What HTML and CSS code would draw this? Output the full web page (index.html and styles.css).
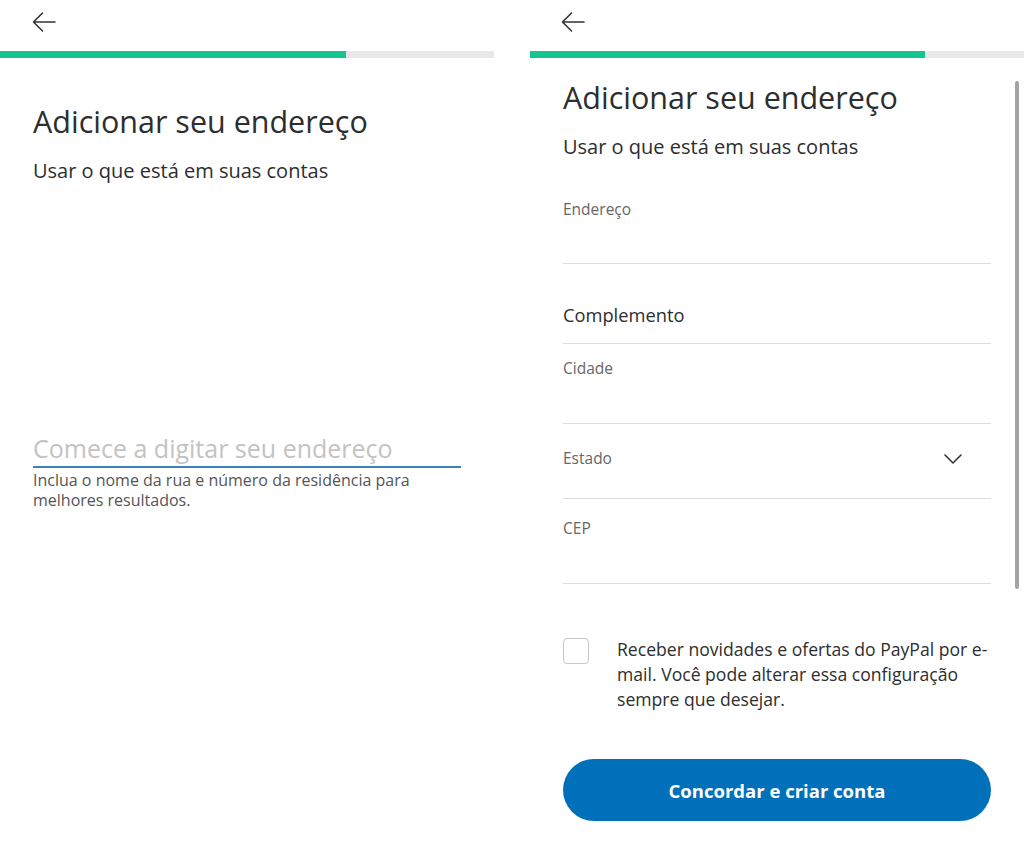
FILE: index.html
```html
<!DOCTYPE html>
<html lang="pt-BR">
<head>
<meta charset="utf-8">
<title>Adicionar seu endereço</title>
<link rel="stylesheet" href="styles.css">
</head>
<body>
<div class="page">
  <section class="screen">
    <header class="topbar">
      <svg class="back" width="24" height="20" viewBox="0 0 24 20" aria-hidden="true">
        <path d="M23 10H1.5M10.5 1L1.5 10l9 9" fill="none" stroke="#333" stroke-width="1.6" stroke-linecap="round" stroke-linejoin="round"/>
      </svg>
    </header>
    <div class="progress"><div class="progress-fill" style="width:70%"></div></div>
    <div class="content content-left">
      <h1 class="title">Adicionar seu endereço</h1>
      <p class="subtitle">Usar o que está em suas contas</p>
      <div class="search">
        <div class="search-input">Comece a digitar seu endereço</div>
        <p class="helper">Inclua o nome da rua e número da residência para melhores resultados.</p>
      </div>
    </div>
  </section>

  <section class="screen screen-right">
    <header class="topbar">
      <svg class="back" width="24" height="20" viewBox="0 0 24 20" aria-hidden="true">
        <path d="M23 10H1.5M10.5 1L1.5 10l9 9" fill="none" stroke="#333" stroke-width="1.6" stroke-linecap="round" stroke-linejoin="round"/>
      </svg>
    </header>
    <div class="progress"><div class="progress-fill" style="width:80%"></div></div>
    <div class="scrollbar"></div>
    <div class="content content-right">
      <h1 class="title">Adicionar seu endereço</h1>
      <p class="subtitle">Usar o que está em suas contas</p>
      <div class="field field-endereco"><span class="label">Endereço</span></div>
      <div class="field field-complemento"><span class="label label-big">Complemento</span></div>
      <div class="field field-cidade"><span class="label">Cidade</span></div>
      <div class="field field-estado">
        <span class="label">Estado</span>
        <svg class="chevron" width="18" height="10" viewBox="0 0 18 10" aria-hidden="true">
          <path d="M1 1l8 8 8-8" fill="none" stroke="#333" stroke-width="1.6" stroke-linecap="round" stroke-linejoin="round"/>
        </svg>
      </div>
      <div class="field field-cep"><span class="label">CEP</span></div>
      <div class="optin">
        <span class="checkbox"></span>
        <p class="optin-text">Receber novidades e ofertas do PayPal por e-mail. Você pode alterar essa configuração sempre que desejar.</p>
      </div>
      <button class="cta">Concordar e criar conta</button>
    </div>
  </section>
</div>
</body>
</html>
```

FILE: styles.css
```css
* { box-sizing: border-box; }
html, body { margin: 0; padding: 0; background: #fff; }
body {
  font-family: "Open Sans", Lato, "Liberation Sans", sans-serif;
  color: #2c2e2f;
  width: 1024px;
  height: 846px;
  overflow: hidden;
}
.page {
  display: flex;
  gap: 36px;
  height: 846px;
}
.screen {
  width: 494px;
  flex: none;
  position: relative;
}
.topbar {
  height: 51px;
  padding: 12px 0 0 32px;
}
.screen-right .topbar { padding-left: 31px; }
.back { display: block; }
.progress {
  height: 7px;
  background: #e8e8e8;
}
.progress-fill {
  height: 100%;
  background: #14c58d;
}
.content { padding: 0 33px; }
.content-left { padding-top: 45px; }
.content-right { padding-top: 21px; }
.title {
  margin: 0;
  font-size: 30.5px;
  line-height: 36px;
  font-weight: 400;
  color: #2c2e2f;
}
.subtitle {
  margin: 20px 0 0;
  font-size: 20px;
  line-height: 24px;
  color: #2c2e2f;
}

.search { margin-top: 250px; }
.search-input {
  font-size: 25px;
  line-height: 30px;
  color: #c3c3c3;
  padding-bottom: 3px;
  border-bottom: 2px solid #3a82bc;
}
.helper {
  margin: 2px 0 0;
  font-size: 16px;
  line-height: 20px;
  color: #555;
  padding-right: 40px;
}

.field {
  border-bottom: 1px solid #dcdcdc;
  display: flex;
  align-items: flex-start;
  justify-content: space-between;
}
.label {
  font-size: 15.5px;
  line-height: 20px;
  color: #666;
}
.label-big {
  font-size: 18.3px;
  line-height: 22px;
  color: #2c2e2f;
}
.field-endereco { height: 105px; padding-top: 40px; }
.field-complemento { height: 80px; padding-top: 40px; }
.field-cidade { height: 80px; padding-top: 14px; }
.field-estado { height: 75px; padding-top: 24px; }
.field-cep { height: 85px; padding-top: 19px; }
.chevron { margin: 6px 29px 0 0; }

.optin {
  display: flex;
  gap: 28px;
  margin-top: 53px;
}
.checkbox {
  flex: none;
  width: 26px;
  height: 26px;
  border: 1.5px solid #c8c8c8;
  border-radius: 4px;
  margin-top: 1px;
}
.optin-text {
  margin: 0;
  font-size: 17.6px;
  line-height: 25px;
  color: #2c2e2f;
}
.cta {
  display: block;
  width: 100%;
  height: 62px;
  margin-top: 47px;
  border: none;
  border-radius: 31px;
  background: #0070ba;
  color: #fff;
  font-family: inherit;
  font-size: 18.5px;
  font-weight: 700;
}
.scrollbar {
  position: absolute;
  left: 485px;
  top: 81px;
  width: 4px;
  height: 508px;
  background: #a3a3a3;
  border-radius: 2px;
}
```
